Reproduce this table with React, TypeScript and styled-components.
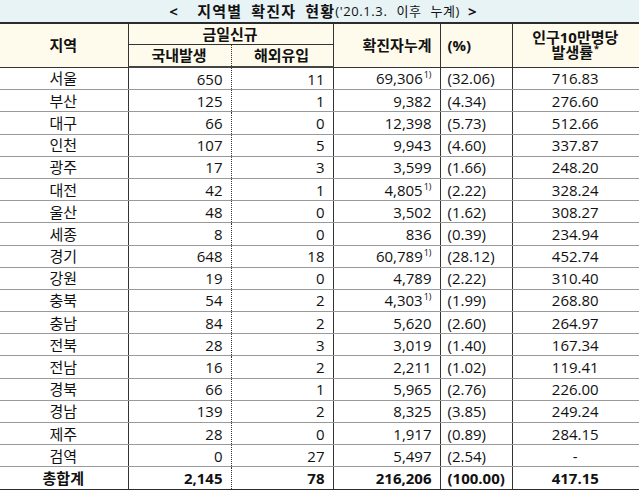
import React from 'react';
import styled, { createGlobalStyle } from 'styled-components';

const Global = createGlobalStyle`
  html, body { margin: 0; padding: 0; background: #fff; }
  body {
    font-family: "Open Sans", "Noto Sans CJK KR", sans-serif;
    color: #111;
  }
`;

const Page = styled.div`
  width: 639px;
`;

const TitleBar = styled.div`
  height: 22px;
  background: #e7f3f5;
  display: flex;
  align-items: center;
  justify-content: center;
  font-size: 15px;
  font-weight: 700;
  line-height: 22px;
  white-space: pre;
  letter-spacing: 1.2px;
  word-spacing: 4px;
  padding-left: 8px;
`;

const TitleNote = styled.span`
  font-size: 13px;
  font-weight: 400;
  letter-spacing: 0.6px;
  word-spacing: 5px;
  margin-right: 8px;
`;

const Table = styled.table`
  width: 639px;
  border-collapse: collapse;
  table-layout: fixed;
  font-size: 15px;
  border-top: 2px solid #2b2b2b;
  border-bottom: 2px solid #2b2b2b;
`;

type Align = 'left' | 'center' | 'right';

const Head = styled.thead`
  background: #fffbec;
`;

const Th = styled.th<{ $align?: Align; $first?: boolean; $dotted?: boolean; $h?: number }>`
  font-weight: 700;
  font-size: 15px;
  line-height: 15px;
  height: ${(p) => p.$h ?? 20}px;
  padding: 0 8px 0 7px;
  text-align: ${(p) => p.$align ?? 'center'};
  border-left: ${(p) => (p.$first ? 'none' : p.$dotted ? '1px dotted #333' : '1px solid #333')};
  border-bottom: 1px solid #333;
  vertical-align: middle;
`;

const HeadBottom = styled.tr`
  & > th { border-bottom: 2px solid #444; }
`;

const Td = styled.td<{ $align?: Align; $first?: boolean; $dotted?: boolean }>`
  height: 21.2px;
  line-height: 18px;
  padding: 0 8px 0 7px;
  text-align: ${(p) => p.$align ?? 'center'};
  border-left: ${(p) => (p.$first ? 'none' : p.$dotted ? '1px dotted #333' : '1px solid #333')};
  border-bottom: 1px solid #999;
  white-space: nowrap;
  overflow: visible;
`;

const TotalRow = styled.tr`
  font-weight: 700;
  & > td { border-top: 1px solid #333; border-bottom: none; }
`;

const Sup = styled.sup`
  font-size: 9px;
  line-height: 0;
  vertical-align: 6px;
  margin-left: 1px;
`;

const TwoLine = styled.div`
  line-height: 15px;
`;

type Row = [string, string, string, string, boolean, string, string];

const rows: Row[] = [
  ['서울', '650', '11', '69,306', true, '(32.06)', '716.83'],
  ['부산', '125', '1', '9,382', false, '(4.34)', '276.60'],
  ['대구', '66', '0', '12,398', false, '(5.73)', '512.66'],
  ['인천', '107', '5', '9,943', false, '(4.60)', '337.87'],
  ['광주', '17', '3', '3,599', false, '(1.66)', '248.20'],
  ['대전', '42', '1', '4,805', true, '(2.22)', '328.24'],
  ['울산', '48', '0', '3,502', false, '(1.62)', '308.27'],
  ['세종', '8', '0', '836', false, '(0.39)', '234.94'],
  ['경기', '648', '18', '60,789', true, '(28.12)', '452.74'],
  ['강원', '19', '0', '4,789', false, '(2.22)', '310.40'],
  ['충북', '54', '2', '4,303', true, '(1.99)', '268.80'],
  ['충남', '84', '2', '5,620', false, '(2.60)', '264.97'],
  ['전북', '28', '3', '3,019', false, '(1.40)', '167.34'],
  ['전남', '16', '2', '2,211', false, '(1.02)', '119.41'],
  ['경북', '66', '1', '5,965', false, '(2.76)', '226.00'],
  ['경남', '139', '2', '8,325', false, '(3.85)', '249.24'],
  ['제주', '28', '0', '1,917', false, '(0.89)', '284.15'],
  ['검역', '0', '27', '5,497', false, '(2.54)', '-'],
];

const Cells: React.FC<{ r: Row }> = ({ r }) => (
  <>
    <Td $first>{r[0]}</Td>
    <Td $align="right">{r[1]}</Td>
    <Td $align="right" $dotted>{r[2]}</Td>
    <Td $align="right">
      {r[3]}
      {r[4] && <Sup>1)</Sup>}
    </Td>
    <Td $align="left">{r[5]}</Td>
    <Td>{r[6]}</Td>
  </>
);

export default function App() {
  return (
    <Page>
      <Global />
      <TitleBar>
        {'<  지역별 확진자 현황'}
        <TitleNote>('20.1.3. 이후 누계)</TitleNote>
        {'>'}
      </TitleBar>
      <Table>
        <colgroup>
          <col style={{ width: 128 }} />
          <col style={{ width: 103 }} />
          <col style={{ width: 102 }} />
          <col style={{ width: 107 }} />
          <col style={{ width: 72 }} />
          <col style={{ width: 127 }} />
        </colgroup>
        <Head>
          <tr>
            <Th $first rowSpan={2}>지역</Th>
            <Th colSpan={2} $h={20}>금일신규</Th>
            <Th rowSpan={2} $align="right">확진자누계</Th>
            <Th rowSpan={2} $align="left">(%)</Th>
            <Th rowSpan={2}>
              <TwoLine>
                인구10만명당
                <br />
                발생률<Sup>*</Sup>
              </TwoLine>
            </Th>
          </tr>
          <HeadBottom>
            <Th $h={21}>국내발생</Th>
            <Th $dotted $h={21}>해외유입</Th>
          </HeadBottom>
        </Head>
        <tbody>
          {rows.map((r) => (
            <tr key={r[0]}>
              <Cells r={r} />
            </tr>
          ))}
          <TotalRow>
            <Cells r={['총합계', '2,145', '78', '216,206', false, '(100.00)', '417.15']} />
          </TotalRow>
        </tbody>
      </Table>
    </Page>
  );
}
